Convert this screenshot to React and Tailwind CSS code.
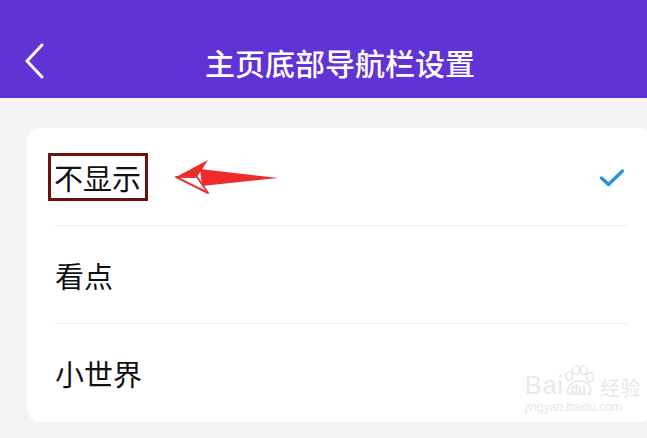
const ROWS = [
  { label: '不显示', selected: true, marked: true },
  { label: '看点' },
  { label: '小世界' },
];

function Arrow() {
  // red annotation arrow pointing left at the boxed label
  return (
    <svg width="106" height="36" viewBox="0 0 106 36" className="ml-[26px] shrink-0">
      <polygon points="26,10 104,19 28,27" fill="#ee2a2a" />
      <polygon points="2,18 34,1 23,18" fill="#ee2a2a" />
      <polygon points="2,18 23,18 34,34" fill="#fff" stroke="#e23a3a" strokeWidth="2" strokeLinejoin="round" />
    </svg>
  );
}

function Watermark() {
  return (
    <div className="absolute left-[525px] top-[364px] flex flex-col items-start pointer-events-none select-none text-[#e8e8e8] font-['Liberation_Sans',sans-serif]">
      <div className="flex items-end">
        <span className="text-[25px] leading-none tracking-[1px]">Bai</span>
        <div className="relative w-[34px] h-[34px] -ml-[2px]">
          <svg width="34" height="34" viewBox="0 0 34 34" className="absolute inset-0">
            <g fill="none" stroke="#e6e6e6" strokeWidth="1.5">
              <ellipse cx="7" cy="12" rx="3.5" ry="4.5" />
              <ellipse cx="14" cy="6" rx="3.5" ry="4.5" />
              <ellipse cx="22" cy="6" rx="3.5" ry="4.5" />
              <ellipse cx="28" cy="13" rx="3.5" ry="4.5" />
              <path d="M6 30 C4 22 11 17 17 17 C24 17 31 22 28 30 Z" />
            </g>
          </svg>
          <span className="absolute left-[8px] top-[18px] text-[13px] leading-none font-bold">du</span>
        </div>
        <span className="ml-[4px] text-[20px] leading-none font-['Noto_Sans_CJK_SC',sans-serif]">经验</span>
      </div>
      <span className="mt-[3px] text-[12px] leading-none">jingyan.baidu.com</span>
    </div>
  );
}

export default function App() {
  return (
    <div className="relative w-[647px] h-[438px] overflow-hidden bg-[#f4f4f4] font-['Noto_Sans_CJK_SC','Noto_Sans',sans-serif]">
      <div className="w-[680px]">
        <header className="h-[98px] pt-[26px] bg-[#6132d4]">
          <div className="relative h-[72px] flex items-center justify-center">
            <svg width="22" height="36" viewBox="0 0 22 36" className="absolute left-[24px] top-[17px]">
              <path d="M18 2 L3 18 L18 34" fill="none" stroke="#fff" strokeWidth="3" strokeLinecap="round" strokeLinejoin="round" />
            </svg>
            <h1 className="text-[30px] font-medium text-white leading-none">主页底部导航栏设置</h1>
          </div>
        </header>

        <div className="mx-[27px] mt-[30px] h-[294px] bg-white rounded-[14px] flex flex-col">
          {ROWS.map((row, i) => (
            <div key={row.label} className="flex-1 flex flex-col">
              <div className="flex-1 flex items-center pl-[28px] pr-[28px]">
                {row.marked ? (
                  <>
                    <span className="-ml-[7px] border-[3px] border-[#6e1010] pl-[3px] pr-[4px] py-[6px] text-[29px] leading-[30px] text-[#111]">
                      {row.label}
                    </span>
                    <Arrow />
                  </>
                ) : (
                  <span className="text-[29px] leading-[30px] text-[#111]">{row.label}</span>
                )}
                {row.selected && (
                  <svg width="26" height="20" viewBox="0 0 26 20" className="ml-auto mt-[3px]">
                    <path d="M2.5 10 L9.5 16.5 L23.5 3" fill="none" stroke="#2596d6" strokeWidth="3.4" strokeLinecap="round" strokeLinejoin="round" />
                  </svg>
                )}
              </div>
              {i < ROWS.length - 1 && <div className="h-px ml-[28px] mr-[25px] bg-[#eeeeee]" />}
            </div>
          ))}
        </div>
      </div>
      <Watermark />
    </div>
  );
}
